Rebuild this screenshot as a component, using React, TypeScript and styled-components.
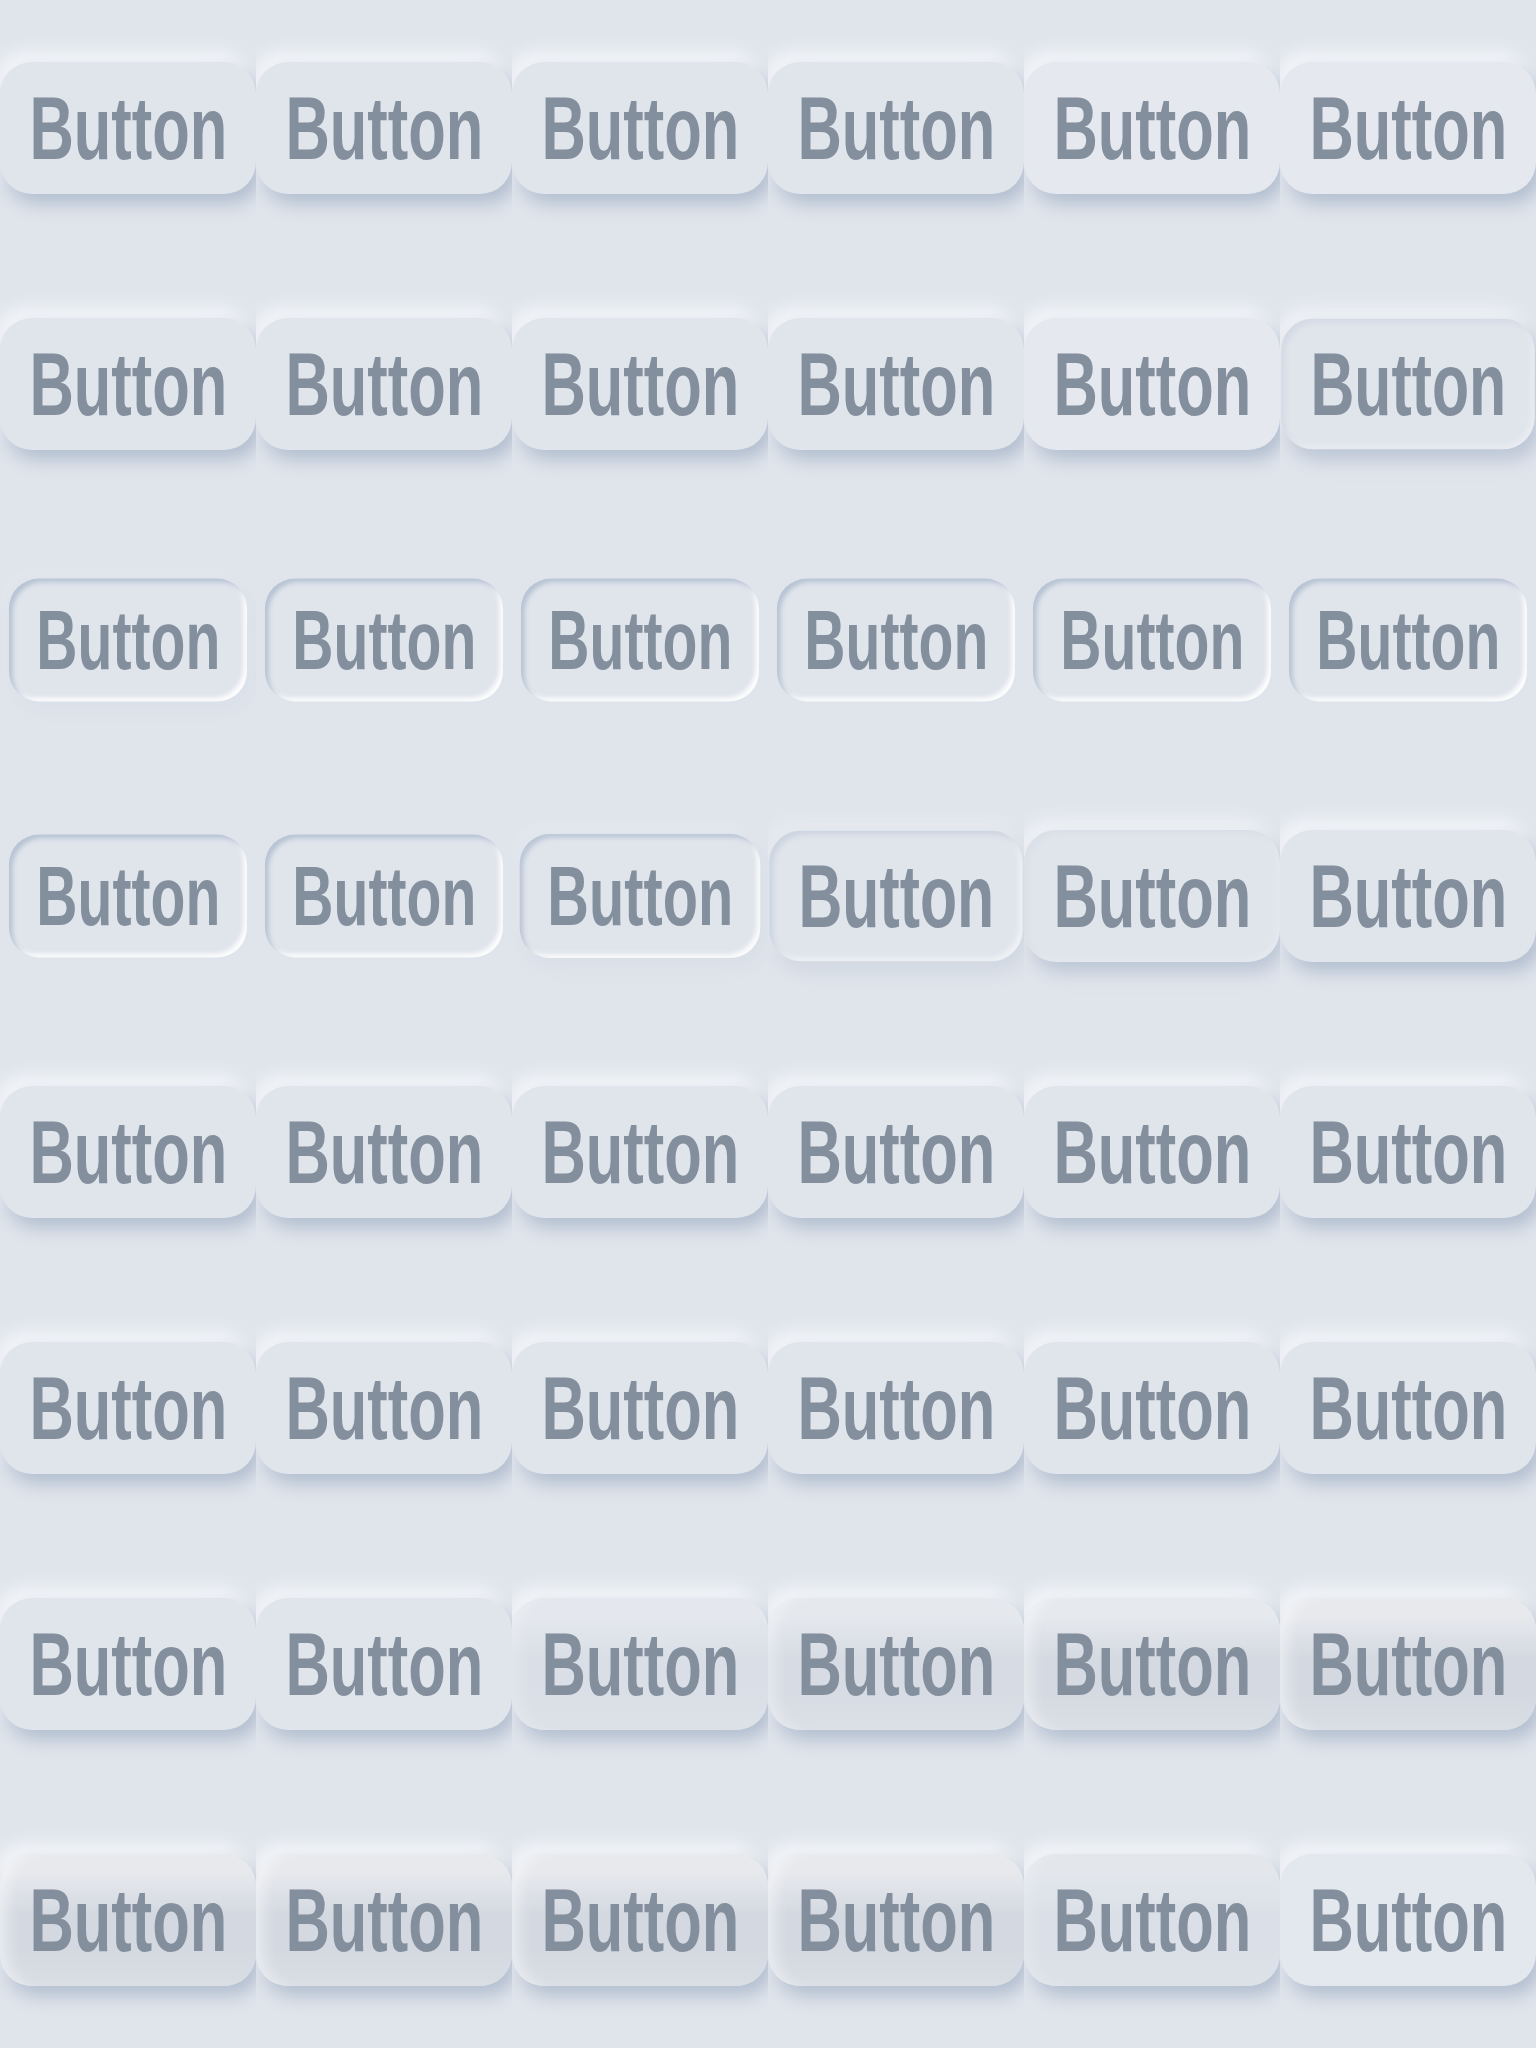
import { FC } from 'react';
import styled, { createGlobalStyle } from 'styled-components';

// one frame of the press animation
type Frame = {
  lift?: number; // raised outer shadow strength
  sink?: number; // inset ring strength
  shade?: number; // concave inner shading
  glow?: number; // lighter face
  scale?: number;
};

const R: Frame = { lift: 1 };

const frames: Frame[] = [
  R, R, R, R, { lift: 1, glow: 1 }, { lift: 1, glow: 1 },
  R, R, R, R, { lift: 1, glow: 1 }, { lift: 0.8, sink: 0.3, scale: 0.99 },
  { sink: 1, scale: 0.93, lift: 0.1 }, { sink: 1, scale: 0.93 }, { sink: 1, scale: 0.93 },
  { sink: 1, scale: 0.93 }, { sink: 1, scale: 0.93 }, { sink: 1, scale: 0.93 },
  { sink: 1, scale: 0.93 }, { sink: 1, scale: 0.93 }, { sink: 0.9, lift: 0.15, scale: 0.94 },
  { sink: 0.5, lift: 0.35, scale: 0.99 }, { sink: 0.15, lift: 0.8 }, R,
  R, R, R, R, R, R,
  R, R, R, R, R, R,
  R, R, { lift: 1, shade: 0.5 }, { lift: 1, shade: 0.75 }, { lift: 1, shade: 0.9 }, { lift: 1, shade: 1 },
  { lift: 1, shade: 1 }, { lift: 1, shade: 1 }, { lift: 1, shade: 1 }, { lift: 1, shade: 1 },
  { lift: 1, shade: 0.4 }, { lift: 1, glow: 0.5 },
];

const base = [224, 229, 236];

const mix = (a: number[], b: number[], t: number) =>
  `rgb(${a.map((v, i) => Math.round(v + (b[i] - v) * t)).join(',')})`;

const face = (f: Frame) => {
  const g = f.glow ?? 0;
  const s = f.shade ?? 0;
  const top = mix(base, [231, 233, 237], s);
  const mid = mix(base, [212, 217, 225], s);
  const bot = mix(base, [217, 221, 228], s);
  if (s > 0) {
    return `linear-gradient(180deg, ${top} 0%, ${top} 14%, ${mid} 45%, ${mid} 70%, ${bot} 100%)`;
  }
  return mix(base, [229, 232, 239], g);
};

const shadow = (f: Frame) => {
  const l = f.lift ?? 0;
  const k = f.sink ?? 0;
  const s = f.shade ?? 0;
  const parts: string[] = [];
  if (l > 0) {
    parts.push(`6px 10px 18px rgba(163,177,198,${0.75 * l})`);
    parts.push(`-6px -10px 18px rgba(255,255,255,${0.7 * l})`);
  }
  if (k > 0) {
    parts.push(`inset 4px 4px 5px rgba(180,192,210,${0.9 * k})`);
    parts.push(`inset -4px -4px 5px rgba(255,255,255,${0.9 * k})`);
  }
  if (s > 0) {
    parts.push(`inset 14px 0 14px -6px rgba(255,255,255,${0.45 * s})`);
  }
  return parts.length ? parts.join(', ') : 'none';
};

const GlobalStyle = createGlobalStyle`
  html, body {
    margin: 0;
    padding: 0;
    background: #e0e5ec;
  }
`;

const Board = styled.div`
  display: grid;
  grid-template-columns: repeat(6, 256px);
  grid-auto-rows: 256px;
  width: 1536px;
  background: #e0e5ec;
`;

const Cell = styled.div`
  display: flex;
  align-items: center;
  justify-content: center;
  overflow: hidden;
`;

const Face = styled.div<{ $f: Frame }>`
  flex: none;
  width: 256px;
  height: 132px;
  border-radius: 32px;
  display: flex;
  align-items: center;
  justify-content: center;
  background: ${(p) => face(p.$f)};
  box-shadow: ${(p) => shadow(p.$f)};
  transform: scale(${(p) => p.$f.scale ?? 1});
`;

const Label = styled.span`
  display: inline-block;
  font-family: 'Liberation Sans', Arial, sans-serif;
  font-weight: 700;
  font-size: 89px;
  color: #848f9e;
  transform: scaleX(0.69);
  white-space: nowrap;
`;

const App: FC = () => (
  <>
    <GlobalStyle />
    <Board>
      {frames.map((f, i) => (
        <Cell key={i}>
          <Face $f={f}>
            <Label>Button</Label>
          </Face>
        </Cell>
      ))}
    </Board>
  </>
);

export default App;
